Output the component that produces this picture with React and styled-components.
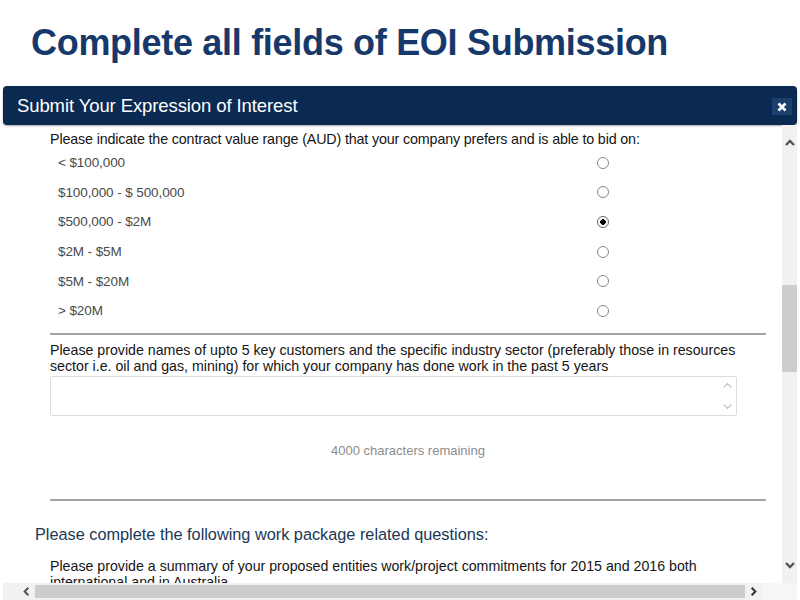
import React from 'react';
import styled, { createGlobalStyle } from 'styled-components';

const GlobalStyle = createGlobalStyle`
  html, body {
    margin: 0;
    padding: 0;
    background: #ffffff;
    font-family: "Liberation Sans", Arial, sans-serif;
  }
`;

const ranges = [
  { label: '< $100,000' },
  { label: '$100,000 - $ 500,000' },
  { label: '$500,000 - $2M', checked: true },
  { label: '$2M - $5M' },
  { label: '$5M - $20M' },
  { label: '> $20M' },
];

const Chevron = ({ dir = 'up', size = 12, color = '#666', weight = 2.2 }) => {
  const paths = {
    up: 'M2 8 L6 4 L10 8',
    down: 'M2 4 L6 8 L10 4',
    left: 'M8 2 L4 6 L8 10',
    right: 'M4 2 L8 6 L4 10',
  };
  return (
    <svg width={size} height={size} viewBox="0 0 12 12">
      <path d={paths[dir]} fill="none" stroke={color} strokeWidth={weight} />
    </svg>
  );
};

const App = () => {
  return (
    <>
      <GlobalStyle />
      <Page>
        <Title>Complete all fields of EOI Submission</Title>
        <Modal>
          <ModalHeader>
            <HeaderTitle>Submit Your Expression of Interest</HeaderTitle>
            <CloseButton>
              <svg width="10" height="10" viewBox="0 0 10 10">
                <path d="M1.5 1.5 L8.5 8.5 M8.5 1.5 L1.5 8.5" stroke="#fff" strokeWidth="2.6" />
              </svg>
            </CloseButton>
          </ModalHeader>
          <ModalBody>
            <Content>
              <Question>
                <QuestionText $strong>
                  Please indicate the contract value range (AUD) that your company prefers and is able to bid on:
                </QuestionText>
                <OptionList>
                  {ranges.map((r) => (
                    <OptionRow key={r.label}>
                      <OptionLabel>{r.label}</OptionLabel>
                      <Radio $checked={r.checked} />
                    </OptionRow>
                  ))}
                </OptionList>
                <Divider />
              </Question>

              <Question>
                <QuestionText>
                  Please provide names of upto 5 key customers and the specific industry sector (preferably those in resources
                  sector i.e. oil and gas, mining) for which your company has done work in the past 5 years
                </QuestionText>
                <TextBox>
                  <TextSpin>
                    <Chevron dir="up" size={11} color="#bbb" weight={1.3} />
                    <Chevron dir="down" size={11} color="#bbb" weight={1.3} />
                  </TextSpin>
                </TextBox>
                <Remaining>4000 characters remaining</Remaining>
                <Divider $gap={40} />
              </Question>

              <SectionHeading>Please complete the following work package related questions:</SectionHeading>

              <Question>
                <QuestionText>
                  Please provide a summary of your proposed entities work/project commitments for 2015 and 2016 both
                  international and in Australia
                </QuestionText>
              </Question>
            </Content>
            <VScroll>
              <ScrollArrow>
                <Chevron dir="up" size={12} color="#555" weight={2.4} />
              </ScrollArrow>
              <VTrack>
                <VThumb />
              </VTrack>
              <ScrollArrow>
                <Chevron dir="down" size={12} color="#555" weight={2.4} />
              </ScrollArrow>
            </VScroll>
          </ModalBody>
          <HScroll>
            <HArrow>
              <Chevron dir="left" size={11} color="#555" weight={2.2} />
            </HArrow>
            <HThumb />
            <HArrow>
              <Chevron dir="right" size={11} color="#333" weight={2.2} />
            </HArrow>
            <Corner />
          </HScroll>
        </Modal>
      </Page>
    </>
  );
};

export default App;

const Page = styled.div`
  width: 800px;
  height: 600px;
  overflow: hidden;
  display: flex;
  flex-direction: column;
`;

const Title = styled.h1`
  margin: 22px 0 0 31px;
  font-family: "Liberation Sans", Arial, sans-serif;
  font-size: 36px;
  line-height: 42px;
  font-weight: bold;
  color: #17386a;
  letter-spacing: -0.3px;
`;

const Modal = styled.div`
  margin: 22px 3px 0 3px;
  display: flex;
  flex-direction: column;
`;

const ModalHeader = styled.div`
  height: 39px;
  background: #0b2a52;
  border-radius: 4px;
  display: flex;
  align-items: center;
  justify-content: space-between;
  padding: 0 5px 0 14px;
  box-shadow: 0 1px 2px rgba(0, 0, 0, 0.35);
`;

const HeaderTitle = styled.span`
  color: #ffffff;
  font-size: 18.5px;
  letter-spacing: -0.1px;
`;

const CloseButton = styled.div`
  width: 20px;
  height: 17px;
  background: #1c3f6e;
  display: flex;
  align-items: center;
  justify-content: center;
  margin-top: 2px;
`;

const ModalBody = styled.div`
  height: 458px;
  display: flex;
`;

const Content = styled.div`
  flex: 1;
  overflow: hidden;
  padding: 5px 0 0 32px;
`;

const Question = styled.div`
  padding-left: 15px;
`;

const QuestionText = styled.p`
  margin: 0;
  font-size: ${(p) => (p.$strong ? '14.3px' : '14.2px')};
  line-height: ${(p) => (p.$strong ? '18px' : '16px')};
  color: #151515;
  letter-spacing: ${(p) => (p.$strong ? '-0.15px' : '0')};
  width: 700px;
`;

const OptionList = styled.div`
  display: flex;
  flex-direction: column;
`;

const OptionRow = styled.div`
  height: 29.6px;
  display: grid;
  grid-template-columns: 539px 12px;
  align-items: center;
  padding-left: 8px;
`;

const OptionLabel = styled.span`
  font-size: 13.5px;
  color: #4a4a4a;
  letter-spacing: -0.1px;
`;

const Radio = styled.span`
  width: 12px;
  height: 12px;
  box-sizing: border-box;
  border-radius: 50%;
  border: 1px solid ${(p) => (p.$checked ? '#666' : '#888')};
  background: ${(p) => (p.$checked ? 'radial-gradient(circle, #000 0 2.6px, #fff 3px)' : '#fff')};
`;

const Divider = styled.div`
  width: 716px;
  height: 2px;
  background: #a3a3a3;
  margin-top: ${(p) => (p.$gap ? `${p.$gap}px` : '7px')};
  margin-bottom: 7px;
`;

const TextBox = styled.div`
  width: 687px;
  height: 40px;
  box-sizing: border-box;
  margin-top: 2px;
  border: 1px solid #dcdcdc;
  border-radius: 2px;
  display: flex;
  justify-content: flex-end;
  padding: 3px 3px;
`;

const TextSpin = styled.div`
  display: flex;
  flex-direction: column;
  justify-content: space-between;
`;

const Remaining = styled.div`
  width: 716px;
  margin-top: 27px;
  text-align: center;
  font-size: 13px;
  line-height: 16px;
  color: #8c8c8c;
`;

const SectionHeading = styled.h2`
  margin: 23px 0 14px 0;
  font-size: 16.3px;
  line-height: 20px;
  font-weight: normal;
  color: #203756;
`;

const VScroll = styled.div`
  width: 15px;
  background: #f1f1f1;
  display: flex;
  flex-direction: column;
  align-items: center;
`;

const ScrollArrow = styled.div`
  height: 36px;
  display: flex;
  align-items: center;
  justify-content: center;
`;

const VTrack = styled.div`
  flex: 1;
  width: 100%;
  padding-top: 124px;
`;

const VThumb = styled.div`
  width: 100%;
  height: 87px;
  background: #cdcdcd;
`;

const HScroll = styled.div`
  height: 17px;
  background: #f1f1f1;
  display: flex;
  align-items: center;
  padding-left: 15px;
`;

const HArrow = styled.div`
  width: 17px;
  height: 17px;
  display: flex;
  align-items: center;
  justify-content: center;
`;

const HThumb = styled.div`
  width: 710px;
  height: 13px;
  background: #cdcdcd;
`;

const Corner = styled.div`
  flex: 1;
  height: 17px;
  background: #f6f6f6;
`;
